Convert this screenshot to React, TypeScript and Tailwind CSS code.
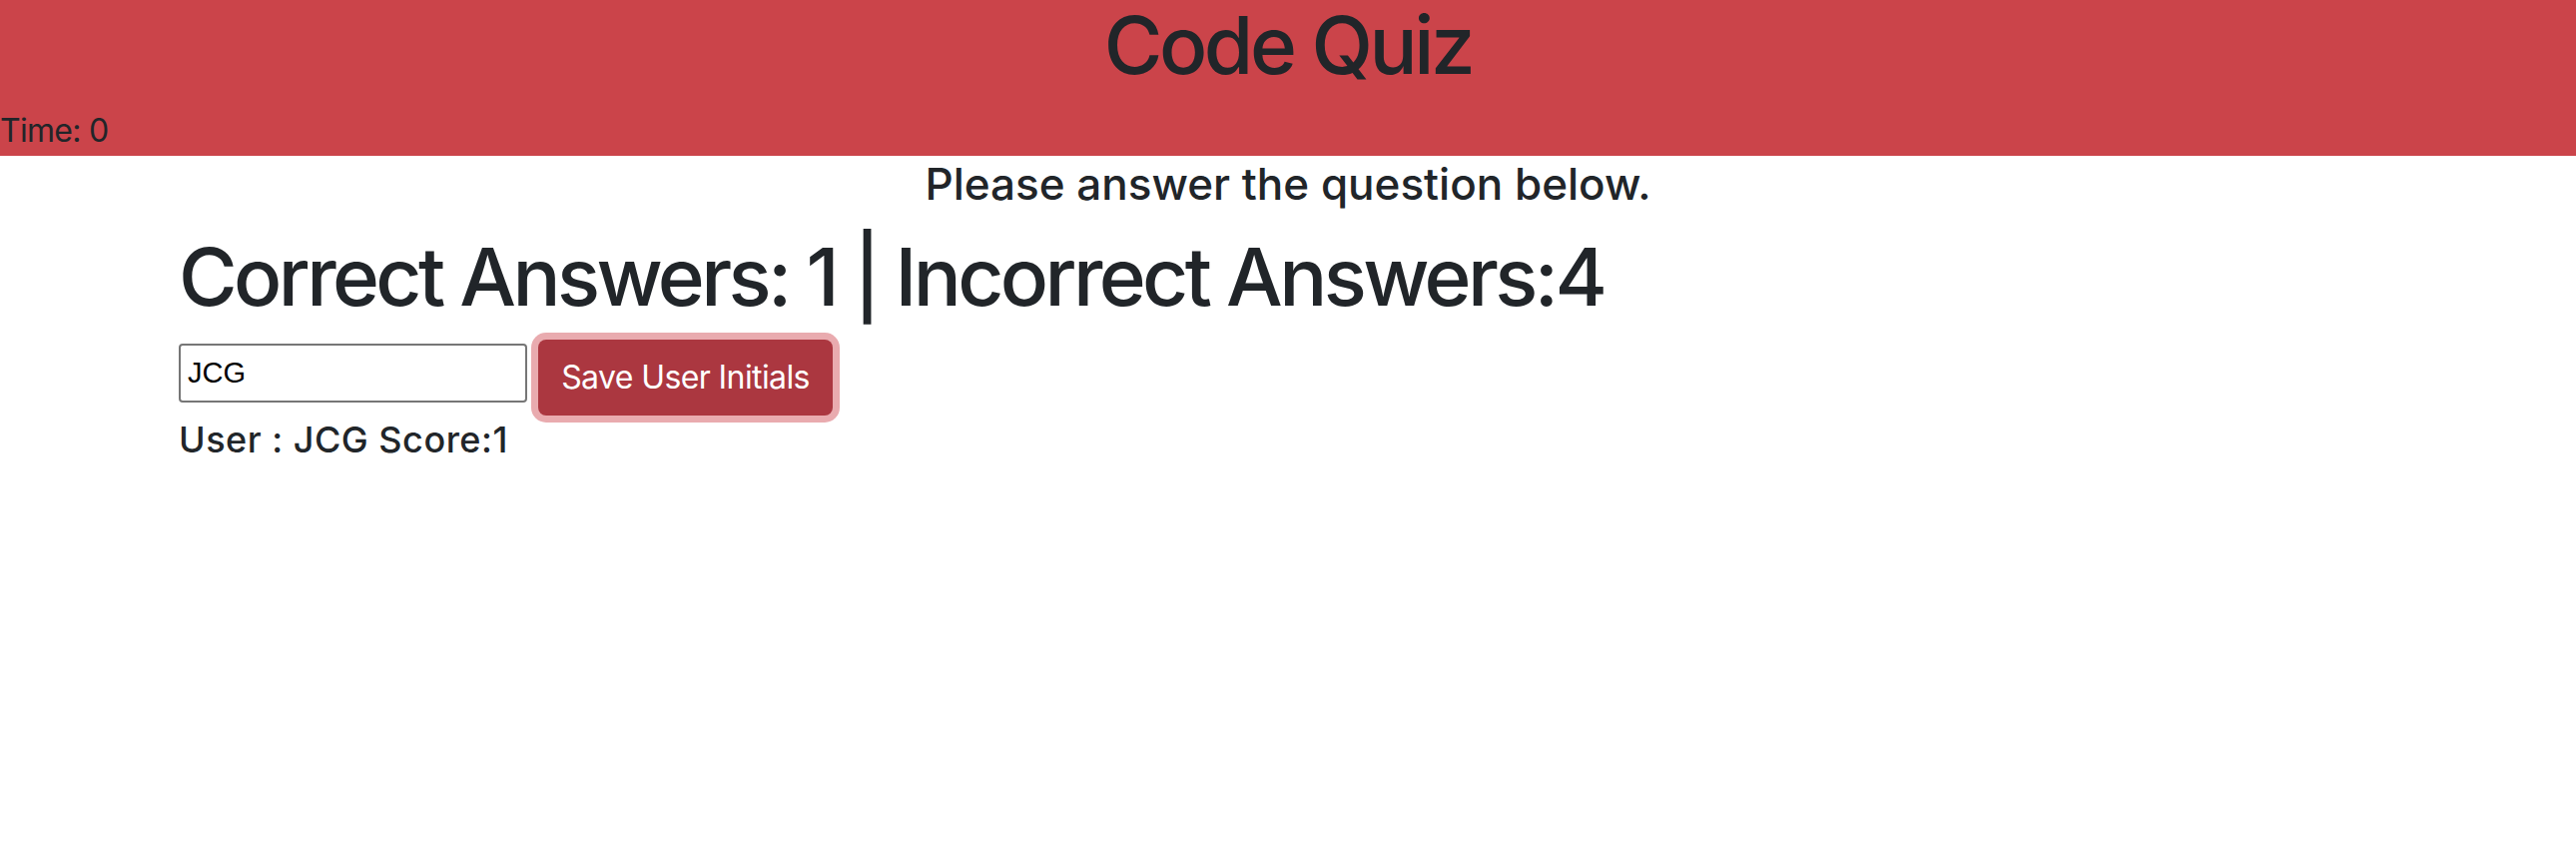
import React, { useState } from 'react';

const App = () => {
    const [initials, setInitials] = useState('JCG');
    const correct = 1;
    const incorrect = 4;

    return (
        <div className="min-h-screen w-full bg-white text-[#212529] font-['Inter','Noto_Sans',sans-serif]">
            <header className="flex h-[156px] flex-col justify-between bg-[#cb444a]">
                <h1 className="mt-[5px] text-center text-[80px] font-medium leading-none tracking-[-3.4px]">Code Quiz</h1>
                <div className="pb-[9px] text-[32px] leading-none tracking-[-0.7px]">Time: 0</div>
            </header>

            <main>
                <h4 className="mt-[6px] text-center text-[44px] font-medium leading-none">
                    Please answer the question below.
                </h4>

                <section className="pl-[179px]">
                    <h1 className="mt-[31px] text-[80px] font-medium leading-none tracking-[-3.6px]">
                        Correct Answers: {correct} | Incorrect Answers:{incorrect}
                    </h1>

                    <div className="mt-[23px] flex items-start gap-[11px]">
                        <input
                            value={initials}
                            onChange={(e) => setInitials(e.target.value)}
                            className="mt-[4px] h-[59px] w-[349px] rounded-[4px] border-2 border-[#767676] px-[7px] font-['Liberation_Sans',sans-serif] text-[29px] text-black outline-none"
                        />
                        <button className="h-[76px] w-[295px] rounded-[8px] bg-[#ab3740] text-[32px] tracking-[-0.6px] text-white ring-[7px] ring-[#e9abaf]">
                            Save User Initials
                        </button>
                    </div>

                    <h5 className="mt-[6px] text-[36px] font-medium leading-none tracking-[0.5px]">
                        User : {initials} Score:{correct}
                    </h5>
                </section>
            </main>
        </div>
    );
};

export default App;
